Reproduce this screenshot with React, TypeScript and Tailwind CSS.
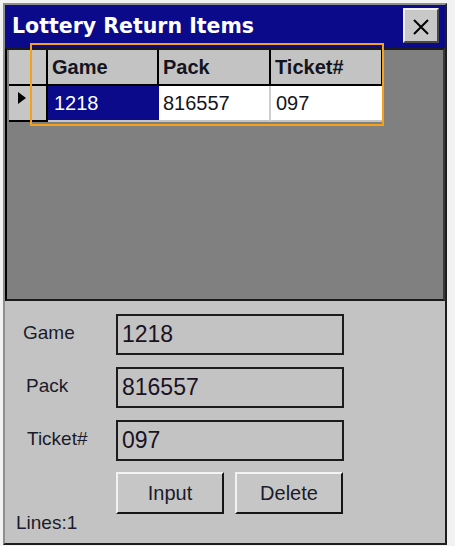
import React from "react";

const sans = "font-['Liberation_Sans',Arial,sans-serif]";

type Row = { game: string; pack: string; ticket: string };

const rows: Row[] = [{ game: "1218", pack: "816557", ticket: "097" }];

const Field: React.FC<{ label: string; value: string; labelPad: string }> = ({
  label,
  value,
  labelPad,
}) => (
  <div className="flex items-center">
    <span className={`w-[93px] mb-[4px] text-[19px] leading-none text-[#1b1b2b] ${labelPad}`}>
      {label}
    </span>
    <div className="w-[228px] h-[41px] border-2 border-[#1c1c1c] flex items-center pl-[4px] text-[23px] leading-none text-[#1a1222]">
      {value}
    </div>
  </div>
);

const Button: React.FC<{ label: string }> = ({ label }) => (
  <button className="w-[108px] h-[42px] bg-[#c6c6c6] border-2 border-t-[#f2f2f2] border-l-[#f2f2f2] border-r-[#151515] border-b-[#151515] text-[20px] leading-none text-[#1b1b2b] flex items-center justify-center">
    {label}
  </button>
);

export default function App() {
  return (
    <div className={`relative w-[455px] h-[546px] bg-[#f2f2f2] pt-[3px] pl-[3px] ${sans}`}>
      <div className="w-[444px] h-[542px] flex flex-col border-2 border-t-[#8e8e8e] border-l-[#8e8e8e] border-r-[#1e1e1e] border-b-[#1e1e1e]">
        {/* title bar */}
        <div className="h-[43px] bg-[#0a0a8a] flex items-center justify-between pl-[7px] pr-[6px]">
          <h1 className="font-['DejaVu_Sans',sans-serif] font-bold text-[20.5px] text-white leading-none">
            Lottery Return Items
          </h1>
          <div className="w-[36px] h-[35px] mb-[3px] bg-[#c8c8c8] border-2 border-t-[#f0f0f0] border-l-[#f0f0f0] border-r-[#4a4a4a] border-b-[#4a4a4a] flex items-center justify-center">
            <svg width="16" height="16" viewBox="0 0 16 16" className="mt-[3px]">
              <path d="M1 1 L15 15 M15 1 L1 15" stroke="#000" strokeWidth="2" />
            </svg>
          </div>
        </div>

        {/* grid */}
        <div className="h-[253px] bg-[#808080] border-t-2 border-t-[#1a1a1a] border-l-2 border-l-black border-b-2 border-b-[#1a1a1a] border-r-2 border-r-[#3a3a3a] pl-[2px]">
          <div className="flex h-[36px]">
            <div className="w-[39px] bg-[#c6c6c6] border-r-2 border-b-2 border-black" />
            {["Game", "Pack", "Ticket#"].map((h, i) => (
              <div
                key={h}
                className={`${i === 0 ? "w-[111px]" : "w-[112px]"} bg-[#c3c3c3] border-r-2 border-b-2 border-black flex items-center pl-[4px] font-bold text-[20px] leading-none text-[#141420]`}
              >
                {h}
              </div>
            ))}
          </div>
          {rows.map((r) => (
            <div key={r.game} className="flex h-[36px]">
              <div className="w-[39px] bg-[#c6c6c6] border-r-2 border-b-2 border-black pl-[9px] pt-[6px]">
                <svg width="8" height="12" viewBox="0 0 8 12">
                  <path d="M0 0 L8 6 L0 12 Z" fill="#000" />
                </svg>
              </div>
              <div className="w-[111px] bg-[#0a0a8a] border-b-2 border-b-[#c4c4c4] flex items-center pl-[6px] text-[20px] leading-none text-white">
                {r.game}
              </div>
              <div className="w-[112px] bg-white border-r-2 border-r-[#cfcfcf] border-b-2 border-b-[#c4c4c4] flex items-center pl-[4px] text-[20px] leading-none text-[#141420]">
                {r.pack}
              </div>
              <div className="w-[112px] bg-white border-b-2 border-b-[#c4c4c4] flex items-center pl-[5px] text-[20px] leading-none text-[#141420]">
                {r.ticket}
              </div>
            </div>
          ))}
        </div>

        {/* edit panel */}
        <div className="flex-1 bg-[#c3c3c4] pt-[13px] pl-[18px] flex flex-col">
          <div className="flex flex-col gap-[12px]">
            <Field label="Game" value="1218" labelPad="" />
            <Field label="Pack" value="816557" labelPad="pl-[3px]" />
            <Field label="Ticket#" value="097" labelPad="pl-[4px]" />
          </div>
          <div className="flex gap-[11px] pl-[93px] mt-[11px]">
            <Button label="Input" />
            <Button label="Delete" />
          </div>
          <div className="-ml-[7px] -mt-[1px] text-[19px] leading-none text-[#1b1b2b]">Lines:1</div>
        </div>
      </div>

      {/* highlight annotation */}
      <div className="absolute left-[30px] top-[43px] w-[354px] h-[83px] border-2 border-[#f5a11c] pointer-events-none" />
    </div>
  );
}
